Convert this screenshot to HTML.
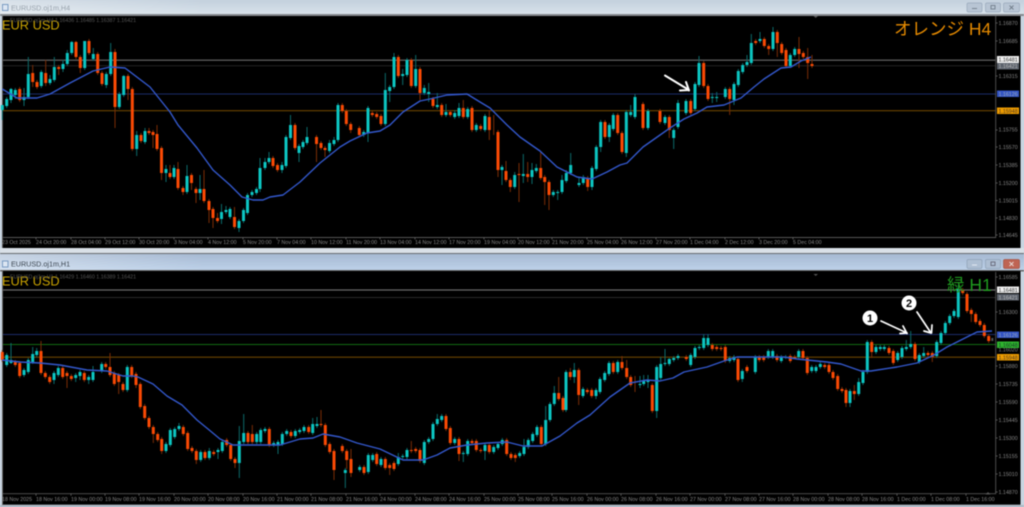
<!DOCTYPE html>
<html><head><meta charset="utf-8"><title>EURUSD</title>
<style>
html,body{margin:0;padding:0;background:#c9d5e1;width:1024px;height:507px;overflow:hidden}
svg{display:block;filter:blur(.4px)}
text{font-family:"Liberation Sans","Noto Sans CJK JP",sans-serif}
.t text,.p text{font-size:5.3px;fill:#858585}
</style></head><body>
<svg width="1024" height="507" viewBox="0 0 1024 507" xmlns="http://www.w3.org/2000/svg">
<defs>
<linearGradient id="g1" x1="0" y1="0" x2="0" y2="1"><stop offset="0" stop-color="#c3d0dd"/><stop offset="1" stop-color="#d8e2ea"/></linearGradient>
<linearGradient id="g2" x1="0" y1="0" x2="0" y2="1"><stop offset="0" stop-color="#a6b9d2"/><stop offset="1" stop-color="#bdd1e9"/></linearGradient>
<linearGradient id="g3" x1="0" y1="0" x2="1" y2="0"><stop offset="0" stop-color="#fff" stop-opacity=".35"/><stop offset=".2" stop-color="#fff" stop-opacity="0"/></linearGradient>
</defs>
<rect width="1024" height="507" fill="#c9d5e1"/>
<!-- top window -->
<rect width="1024" height="14" fill="url(#g1)"/><rect width="1024" height="14" fill="url(#g3)"/>
<rect y="14" width="1024" height="2" fill="#85898e"/>
<rect x="2" y="16" width="1018.5" height="232" fill="#000"/>
<rect x="2" y="16" width="1" height="232" fill="#555"/>
<rect x="2.5" y="4.5" width="5.5" height="6" fill="#dce6f2" stroke="#6f93bd" stroke-width=".9"/>
<text x="11" y="10.5" font-size="7.2" fill="#98a2ac">EURUSD.oj1m,H4</text>
<g fill="#b8c5d4" stroke="#98a8bb" stroke-width=".7"><rect x="967" y="3" width="15" height="9" rx="1.5"/><rect x="985.5" y="3" width="15" height="9" rx="1.5"/><rect x="1003.5" y="3" width="16" height="9" rx="1.5"/></g>
<g fill="none" stroke="#717d8a" stroke-width=".9"><path d="M972 8.5h5"/><rect x="991" y="5.5" width="4" height="3.5"/><path d="M1009.5 5.5l4 4M1013.5 5.5l-4 4"/></g>
<!-- bottom window -->
<rect y="248" width="1024" height="5" fill="#d9e0e7"/>
<rect y="253" width="1024" height="1" fill="#686c70"/>
<rect y="254" width="1024" height="16" fill="url(#g2)"/><rect y="254" width="1024" height="16" fill="url(#g3)"/>
<rect y="270" width="1024" height="1.5" fill="#666"/>
<rect x="2" y="271" width="1018.5" height="233.7" fill="#000"/>
<rect x="2" y="271" width="1" height="234" fill="#666"/>
<rect y="505" width="1024" height="2" fill="#aeb8c3"/>
<rect x="2.5" y="261" width="5.5" height="6" fill="#dce6f2" stroke="#6f93bd" stroke-width=".9"/>
<text x="11" y="266.5" font-size="7.2" fill="#3c4650">EURUSD.oj1m,H1</text>
<g stroke-width=".7"><rect x="967" y="259.5" width="15" height="9" rx="1.5" fill="#aebfd3" stroke="#8da0b5"/><rect x="985.5" y="259.5" width="15" height="9" rx="1.5" fill="#aebfd3" stroke="#8da0b5"/><rect x="1003.5" y="259.5" width="16" height="9" rx="1.5" fill="#bf6453" stroke="#a35445"/></g>
<g fill="none" stroke-width=".9"><path d="M972 265h5" stroke="#e8eef5"/><rect x="991" y="262" width="4" height="3.5" stroke="#667"/><path d="M1009.5 262l4 4M1013.5 262l-4 4" stroke="#e8dcd8"/></g>

<!-- top chart levels -->
<path d="M3 60.2H996" stroke="#6a6a6a" stroke-width="1.2" fill="none"/>
<path d="M3 65.7H996" stroke="#222" fill="none"/>
<path d="M3 94H996" stroke="#1b2b68" stroke-width="1.1" fill="none"/>
<path d="M3 110.7H996" stroke="#6b4400" stroke-width="1.1" fill="none"/>
<!-- top wicks -->
<path fill="none" stroke="#0b6b6b" stroke-width="1" d="M2.3 105V120M6.7 97V108M11 88V103M15.3 88V99M24 88V106M28.3 57V99M41.3 70V88M50 75V85M54.3 57V82M63 60V72M67.3 50V66M71.7 41V55M84.7 41V70M93.3 48V61M106.3 72V88M110.7 43V76M119.3 92V109M123.7 75V97M136.7 131V156M145 128V144M166 165V182M174 165V179M187 165V194M200 175V200M221.5 204V224M226 206V214M230 207V219M239 219V232M243.5 208V223M247.5 193V215M252 190V197M256.5 187V195M260 158V192M265 158V170M269 152V164M282 162V173M286 135V168M290.5 115V140M299 144V162M303 140V149M307 127V145M329.5 140V153M334 137V146M338 103V142M363.7 130V137M368 106V142M385.3 73V126M389.7 85V102M394 53V89M402.7 69V85M407 58V77M415.7 55V88M424.3 85V95M428.7 83V102M437.3 93V109M446 104V117M454.7 110V119M459 103V118M467.7 107V119M476.3 123V132M485 114V132M502 165V185M514.7 172V189M523.3 154V183M532 163V184M536.3 164V173M553.3 190V197M557.7 190V200M562 175V194M566.3 170V183M570.7 153V175M579 177V187M583.3 175V185M592 166V190M596.3 145V171M600.7 120V152M609.3 123V142M613.3 113V131M626.3 110V157M630.7 105V117M635 94V119M648 109V130M665 115V125M673.7 128V149M678 100V129M686 99V115M695 82V111M699 56V87M712.3 93V103M716.7 92V102M725.3 87V99M734 82V105M738.3 69V87M742.7 63V74M747 55V67M751.3 34V65M760 32V43M773 27V51M790.3 53V68M794.7 47V57"/>
<path fill="none" stroke="#7a2c06" stroke-width="1" d="M19.7 87V102M32.7 65V87M37 80V89M45.7 60V86M58.7 65V75M76 41V59M80.3 55V73M89 39V55M97.7 52V75M102 71V86M115 49V128M128 74V100M132.3 87V151M141 133V143M149 128V135M153 130V148M157 125V151M161.5 146V180M170 165V179M178 162V190M183 186V195M191.5 173V190M196 187V203M204 170V203M209 199V223M213 207V228M217.5 213V223M234.5 207V229M273 156V168M277.5 163V172M295 123V150M316.5 135V162M321 141V150M325 146V157M342.3 103V113M346.3 109V126M350.7 122V133M359.3 126V137M372.3 111V117M376.7 112V119M381 114V126M398.3 55V78M411.3 58V88M420 67V100M433 97V108M441.7 103V117M450.3 110V117M463.3 100V119M472 106V132M480.7 124V131M489.3 110V140M493.7 115V135M498 130V177M506 161V182M510.3 178V192M519 163V202M527.7 162V182M540.7 152V180M544.7 175V205M549 180V210M587.7 176V191M605 120V139M617.7 113V135M622 131V154M643 102V130M660 109V124M669.3 115V138M690.7 99V115M703.7 61V88M708 84V101M729.7 87V115M755.7 39V45M764.3 37V48M768.7 44V55M777.3 30V57M781.7 42V55M786 48V68M799 37V68M803.3 51V59M807.7 48V79M812 55V68"/>
<!-- top bodies -->
<path fill="none" stroke="#0cc6c2" stroke-width="3" d="M2.3 105V110M6.7 99V106M11 89V100M15.3 90V95M24 97V100M28.3 74V97M41.3 72V86M50 79V83M54.3 67V80M63 64V69M67.3 53V64M71.7 42V53M84.7 41V68M93.3 54V59M106.3 74V85M110.7 52V74M119.3 94V107M123.7 76V95M136.7 135V149M145 131V142M166 169V173M174 168V177M187 176V192M200 189V193M221.5 212V219M226 210V212M230 209V217M239 221V228M243.5 210V221M247.5 195V213M252 192V195M256.5 189V193M260 168V189M265 162V168M269 158V162M282 165V170M286 137V166M290.5 125V138M299 146V153M303 142V147M307 137V143M329.5 143V151M334 140V144M338 105V140M363.7 132V135M368 108V133M385.3 90V124M389.7 87V91M394 57V87M402.7 74V76M407 60V75M415.7 69V86M424.3 88V93M428.7 92V94M437.3 105V107M446 112V115M454.7 113V117M459 108V116M467.7 109V117M476.3 125V130M485 116V130M502 167V170M514.7 175V187M523.3 174V176M532 170V177M536.3 168V171M553.3 192V195M557.7 192V193M562 180V192M566.3 173V181M570.7 165V173M579 183V185M583.3 177V183M592 168V187M596.3 147V169M600.7 122V147M609.3 125V137M613.3 115V129M626.3 112V153M630.7 112V115M635 97V117M648 111V128M665 117V123M673.7 130V138M678 103V127M686 101V113M695 84V109M699 63V85M712.3 97V98M716.7 97V98M725.3 89V97M734 84V100M738.3 71V85M742.7 65V72M747 62V65M751.3 43V63M760 39V41M773 32V49M790.3 55V66M794.7 49V55"/>
<path fill="none" stroke="#fb4a04" stroke-width="3" d="M19.7 89V100M32.7 73V82M37 82V87M45.7 73V83M58.7 67V69M76 42V57M80.3 57V68M89 41V53M97.7 54V73M102 73V84M115 52V107M128 76V89M132.3 89V149M141 135V141M149 131V133M153 132V135M157 134V149M161.5 148V173M170 173V177M178 169V188M183 188V192M191.5 175V183M196 189V193M204 189V201M209 201V210M213 209V218M217.5 218V221M234.5 217V227M273 158V166M277.5 165V170M295 125V148M316.5 137V144M321 143V148M325 148V150M342.3 105V111M346.3 111V124M350.7 124V130M359.3 128V135M372.3 113V115M376.7 114V117M381 116V124M398.3 57V76M411.3 60V86M420 69V93M433 99V106M441.7 105V115M450.3 112V115M463.3 108V117M472 108V130M480.7 126V129M489.3 117V130M498 132V170M506 171V180M510.3 180V187M519 174V175M527.7 174V177M540.7 168V178M544.7 177V182M549 182V195M587.7 178V187M605 122V137M617.7 115V133M622 133V152M643 104V128M660 111V122M669.3 117V130M690.7 101V113M703.7 63V86M708 86V99M729.7 89V99M755.7 41V43M764.3 39V46M768.7 46V49M777.3 32V43M781.7 44V53M786 50V66M799 49V54M803.3 53V57M807.7 57V63M812 64V66"/>
<polyline fill="none" stroke="#3358cc" stroke-width="1.4" stroke-linejoin="round" points="2.3,89 17,98 37,98 50,94 70,83 93,71 110,67 125,68 150,87 170,112 178,125 197,148 213,170 230,185 242,197 253,200 263,200 270,197 283,195 300,182 320,163 340,147 350,141 367,133 380,131 390,125 403,112 420,101 430,99 447,95 467,94 480,102 490,108 507,125 520,137 540,151 557,167 577,177 592,179 607,172 620,165 627,163 643,147 670,128 684,119 697,113 707,107 724,105 741,98 754,87 764,79 781,68 791,67 801,61 811,57"/>
<path d="M665 75.5L689 90M689 90L680 90.5M689 90.5L686 82" fill="none" stroke="#fff" stroke-width="2" stroke-linecap="round"/>
<text x="2" y="29.3" font-size="12.8" fill="#c8a200">EUR USD</text>
<text x="10" y="22" font-size="5.3" fill="#555">EURUSD.oj1m,H4 1.16436 1.16485 1.16387 1.16421</text>
<text x="894" y="35" font-size="17.5" fill="#e58a00">オレンジ H4</text>
<path d="M815.7 18L813.5 16H818z" fill="#555"/>
<!-- top axes -->
<path d="M995.7 16V237.5H3" fill="none" stroke="#555" stroke-width=".9"/>
<path stroke="#666" stroke-width=".8" d="M995.7 23h2M995.7 41h2M995.7 76h2M995.7 130h2M995.7 147h2M995.7 165h2M995.7 183h2M995.7 200.5h2M995.7 218h2M995.7 235h2M36 237.5v2M71 237.5v2M105 237.5v2M139 237.5v2M174 237.5v2M208 237.5v2M243 237.5v2M277 237.5v2M311 237.5v2M346 237.5v2M380 237.5v2M415 237.5v2M449 237.5v2M484 237.5v2M518 237.5v2M552 237.5v2M587 237.5v2M621 237.5v2M656 237.5v2M690 237.5v2M725 237.5v2M759 237.5v2M793 237.5v2"/>
<g class="p"><text x="998.5" y="25">1.16870</text><text x="998.5" y="43">1.16685</text><text x="998.5" y="78">1.16315</text><text x="998.5" y="131.5">1.15755</text><text x="998.5" y="149">1.15570</text><text x="998.5" y="167">1.15385</text><text x="998.5" y="185">1.15200</text><text x="998.5" y="202.5">1.15015</text><text x="998.5" y="220">1.14830</text><text x="998.5" y="237">1.14645</text></g>
<rect x="997" y="56" width="22" height="7" fill="#eee"/><text x="998.5" y="61.5" font-size="5.3" fill="#333">1.16481</text>
<rect x="997" y="63" width="22" height="6.5" fill="#5c626c"/><text x="998.5" y="68" font-size="5.3" fill="#bbb">1.16421</text>
<rect x="997" y="90.5" width="22" height="6.5" fill="#3354c4"/><text x="998.5" y="95.8" font-size="5.3" fill="#9ab">1.16126</text>
<rect x="997" y="107.5" width="22" height="6.5" fill="#ee9c00"/><text x="998.5" y="112.8" font-size="5.3" fill="#432">1.15948</text>
<g class="t"><text x="2" y="244">23 Oct 2025</text><text x="36" y="244">24 Oct 20:00</text><text x="71" y="244">28 Oct 04:00</text><text x="105" y="244">29 Oct 12:00</text><text x="139" y="244">30 Oct 20:00</text><text x="174" y="244">3 Nov 04:00</text><text x="208" y="244">4 Nov 12:00</text><text x="243" y="244">5 Nov 20:00</text><text x="277" y="244">7 Nov 04:00</text><text x="311" y="244">10 Nov 12:00</text><text x="346" y="244">11 Nov 20:00</text><text x="380" y="244">13 Nov 04:00</text><text x="415" y="244">14 Nov 12:00</text><text x="449" y="244">17 Nov 20:00</text><text x="484" y="244">19 Nov 04:00</text><text x="518" y="244">20 Nov 12:00</text><text x="552" y="244">21 Nov 20:00</text><text x="587" y="244">25 Nov 04:00</text><text x="621" y="244">26 Nov 12:00</text><text x="656" y="244">27 Nov 20:00</text><text x="690" y="244">1 Dec 04:00</text><text x="725" y="244">2 Dec 12:00</text><text x="759" y="244">3 Dec 20:00</text><text x="793" y="244">5 Dec 04:00</text></g>

<!-- bottom chart levels -->
<path d="M3 290H996" stroke="#6a6a6a" stroke-width="1.2" fill="none"/>
<path d="M3 297.5H996" stroke="#2a2a2a" fill="none"/>
<path d="M3 334.5H996" stroke="#1b2b68" stroke-width="1.1" fill="none"/>
<path d="M3 344.5H996" stroke="#116a11" stroke-width="1.1" fill="none"/>
<path d="M3 357.2H996" stroke="#6b4400" stroke-width="1.1" fill="none"/>
<!-- bottom wicks -->
<path fill="none" stroke="#0b6b6b" stroke-width="1" d="M6.7 353V367M11 343V364M24 368V377M28.3 358V374M32.7 347V364M36.7 348V357M54 371V384M58.3 366V377M75.7 373V382M80 370V380M88.7 375V384M93 366V382M101.7 362V373M127.3 365V392M166 442V453M170.3 428V447M174.7 427V439M179 423V431M200.7 450V462M209.3 448V460M218 448V459M222.3 440V453M239.3 426V478M243.7 414V444M256.7 432V444M260.7 428V444M265 427V433M273.7 441V447M278 440V454M282.3 432V446M286.7 429V436M295.3 429V438M299.7 428V434M304 425V433M312.7 418V435M317 417V428M345.3 468V488M359.7 465V472M368.3 453V474M372.7 453V462M381 457V467M398.3 453V466M402.7 454V459M407 448V459M424.3 440V465M428.7 437V444M433 422V441M437.3 414V426M441.7 414V422M454.7 437V445M463.3 451V462M467.7 439V456M485 443V460M493.7 445V454M498 442V450M502.3 438V446M519.7 451V458M524 439V456M528.3 438V449M532.7 432V443M537 425V437M545.7 406V446M550 402V422M554.3 386V406M566 370V412M574.3 363V383M583 387V398M596 388V399M600 377V394M604.7 371V382M609 361V376M617.7 360V374M640 376V388M643.7 375V386M648 375V388M656.7 365V418M660.7 357V380M665 349V366M669.3 358V366M673.7 356V362M678 354V360M690.7 353V367M695 346V359M699.3 345V350M703.7 334V350M708 334V347M729.7 356V363M734 355V362M742.3 369V382M755.3 355V374M768.3 349V359M772.7 349V359M781.3 355V363M785.7 355V359M798.7 349V359M811.7 365V373M816 365V373M820.3 362V369M850 389V407M858.7 378V396M863 370V385M867.3 340V374M876 345V354M880.3 345V351M884.3 345V351M897.7 351V362M902 346V359M906.3 340V351M910.7 331V349M919.3 353V364M923.7 347V358M936.7 340V358M941 331V345M945.3 321V335M949.7 314V325M954 309V318M958.3 285V319"/>
<path fill="none" stroke="#7a2c06" stroke-width="1" d="M2.3 350V362M15.3 360V367M19.7 361V378M41 341V375M45.3 371V379M49.7 375V384M62.7 366V379M67 371V388M71.3 374V381M84.3 371V382M105.7 362V369M110 353V377M114.3 371V386M118.7 373V394M123 382V392M131.7 365V378M136 372V388M140.3 382V409M144.7 404V420M149 416V429M153.3 425V443M157.7 432V442M161.7 437V454M183.3 425V436M187.7 431V451M192 446V453M196.3 449V464M205 450V460M213.7 450V456M226.7 438V447M230.7 443V461M235 457V468M248 431V444M252.3 425V444M269.3 427V447M291 430V438M308.7 425V434M321 410V427M325.3 423V447M329.7 442V454M334 449V480M342.3 444V453M346.7 449V469M351 449V477M364 465V475M376.7 452V466M385.3 457V470M389.7 463V475M394 461V471M411.3 441V453M415.7 447V453M420 448V463M446 414V431M450.3 426V445M459 437V461M472 439V445M476.3 439V452M480.7 448V453M489.3 443V454M506.7 438V456M511 452V460M515.3 453V462M541.3 425V446M558.7 377V401M563 396V412M570.3 368V380M578.7 368V405M587.3 388V394M591.7 388V398M613.3 361V374M622 356V370M626.7 360V379M630.7 375V387M635 376V392M652.3 383V413M686.3 355V361M712.3 343V351M716.7 345V351M721 346V351M725.3 345V363M738 357V382M747 365V373M759.3 355V362M763.7 355V362M777 354V362M790.3 354V363M794.7 355V359M803 349V360M807.3 356V375M824.7 363V369M829 363V374M833 370V380M837.7 374V391M842 387V393M846 388V407M854.3 385V400M871.7 340V358M889 346V355M893.3 349V365M915 342V361M928 351V357M932.3 351V362M962.7 288V295M967 292V313M971.3 308V322M975.7 312V324M980 319V327M984.3 323V338M988.7 334V343"/>
<!-- bottom bodies -->
<path fill="none" stroke="#0cc6c2" stroke-width="3" d="M6.7 355V365M11 360V363M24 370V375M28.3 360V372M32.7 354V362M36.7 351V355M54 373V380M58.3 368V375M75.7 375V378M80 372V376M88.7 377V380M93 372V380M101.7 364V371M127.3 367V390M166 444V451M170.3 430V445M174.7 429V437M179 426V429M200.7 452V460M209.3 451V458M218 450V452M222.3 442V451M239.3 441V463M243.7 433V442M256.7 434V442M260.7 430V442M265 429V431M273.7 443V445M278 442V445M282.3 434V444M286.7 431V434M295.3 431V436M299.7 430V432M304 427V431M312.7 424V433M317 424V426M345.3 470V473M359.7 467V470M368.3 455V472M372.7 455V460M381 459V465M398.3 457V464M402.7 456V457M407 450V457M424.3 442V463M428.7 439V442M433 424V439M437.3 419V424M441.7 416V420M454.7 439V443M463.3 453V454M467.7 441V454M485 445V451M493.7 447V452M498 444V448M502.3 440V444M519.7 453V456M524 447V454M528.3 440V447M532.7 434V441M537 427V435M545.7 420V444M550 404V420M554.3 393V404M566 372V410M574.3 370V377M583 389V396M596 390V396M600 379V392M604.7 373V380M609 363V374M617.7 362V372M640 384V385M643.7 381V384M648 380V382M656.7 367V411M660.7 364V378M665 363V364M669.3 359V364M673.7 358V360M678 356V358M690.7 355V365M695 348V357M699.3 347V348M703.7 338V348M708 338V345M729.7 358V361M734 357V360M742.3 371V379M755.3 357V372M768.3 351V357M772.7 351V357M781.3 357V361M785.7 357V358M798.7 351V357M811.7 367V371M816 367V371M820.3 364V367M850 391V403M858.7 382V394M863 372V383M867.3 342V372M876 347V352M880.3 347V349M884.3 347V349M897.7 353V360M902 348V357M906.3 347V349M910.7 344V347M919.3 355V362M923.7 353V356M936.7 342V356M941 333V343M945.3 323V333M949.7 316V323M954 311V316M958.3 289V317"/>
<path fill="none" stroke="#fb4a04" stroke-width="3" d="M2.3 352V360M15.3 362V365M19.7 363V376M41 351V373M45.3 373V377M49.7 377V382M62.7 368V377M67 373V376M71.3 376V379M84.3 373V380M105.7 364V367M110 367V375M114.3 373V384M118.7 375V382M123 384V390M131.7 367V376M136 374V385M140.3 384V407M144.7 406V418M149 418V427M153.3 427V434M157.7 434V440M161.7 439V451M183.3 427V434M187.7 433V449M192 448V451M196.3 451V460M205 452V458M213.7 452V454M226.7 440V445M230.7 445V459M235 459V463M248 433V442M252.3 434V442M269.3 429V445M291 432V436M308.7 427V432M321 424V425M325.3 425V445M329.7 444V452M334 451V470M342.3 446V451M346.7 451V460M351 459V473M364 467V473M376.7 454V464M385.3 459V468M389.7 465V468M394 463V469M411.3 450V451M415.7 449V451M420 450V461M446 416V429M450.3 428V443M459 439V454M472 441V443M476.3 441V450M480.7 450V451M489.3 445V452M506.7 440V454M511 454V458M515.3 455V458M541.3 427V444M558.7 393V399M563 398V410M570.3 372V377M578.7 370V395M587.3 390V392M591.7 390V396M613.3 363V372M622 362V368M626.7 368V377M630.7 377V385M652.3 385V411M686.3 357V359M712.3 345V349M716.7 347V349M721 348V349M725.3 347V361M738 359V380M747 367V371M759.3 357V360M763.7 357V360M777 356V360M790.3 356V361M794.7 357V358M803 351V358M807.3 358V373M824.7 365V367M829 365V372M833 372V378M837.7 376V389M842 389V391M846 390V403M854.3 391V394M871.7 342V352M889 348V353M893.3 351V363M915 344V359M928 353V355M932.3 353V357M962.7 290V293M967 294V311M971.3 310V314M975.7 314V322M980 321V325M984.3 325V336M988.7 336V341"/>
<path d="M992.3 338V341" stroke="#555" stroke-width="2" fill="none"/>
<polyline fill="none" stroke="#3358cc" stroke-width="1.4" stroke-linejoin="round" points="2,360 20,362 40,363 60,365 87,370 107,371 123,376 133,376 138,377 153,384 167,396 182,405 197,420 208,429 220,439 233,445 267,445 280,445 300,439 313,438 323,434 340,437 357,443 380,449 403,460 423,460 437,455 450,448 467,445 487,443 507,442 523,446 542,446 560,436 577,423 590,415 610,397 630,383 647,380 660,381 673,378 684,372 707,367 724,361 737,357 784,357 797,359 827,362 841,364 861,371 871,371 897,367 917,363 934,355 947,347 961,340 977,332 992,331"/>
<path d="M881 321L907 333M907 333L900 333.5M907 333.5L903 326M917 312L931 333M931 333L924 331M931.5 333L932 325" fill="none" stroke="#fff" stroke-width="1.7" stroke-linecap="round"/>
<circle cx="870" cy="318" r="7.5" fill="#fff"/><text x="870" y="322" font-size="11" font-weight="bold" text-anchor="middle" fill="#000">1</text>
<circle cx="909" cy="303" r="7.5" fill="#fff"/><text x="909" y="307" font-size="11" font-weight="bold" text-anchor="middle" fill="#000">2</text>
<text x="2" y="285.3" font-size="12.8" fill="#c8a200">EUR USD</text>
<text x="10" y="278.5" font-size="5.3" fill="#555">EURUSD.oj1m,H1 1.16429 1.16460 1.16389 1.16421</text>
<text x="947" y="291" font-size="17.5" fill="#1f9a1f">緑 H1</text>
<path d="M815.7 276L813.5 274H818z" fill="#555"/>
<path d="M988 492l-2.5 2.5h5z" fill="#555"/>
<!-- bottom axes -->
<path d="M995.7 272V493.7H3" fill="none" stroke="#555" stroke-width=".9"/>
<path stroke="#666" stroke-width=".8" d="M995.7 277h2M995.7 312h2M995.7 366h2M995.7 384h2M995.7 402h2M995.7 420h2M995.7 438h2M995.7 456h2M995.7 474h2M995.7 492h2M36 493.7v2M71 493.7v2M105 493.7v2M139 493.7v2M174 493.7v2M208 493.7v2M243 493.7v2M277 493.7v2M311 493.7v2M346 493.7v2M380 493.7v2M415 493.7v2M449 493.7v2M484 493.7v2M518 493.7v2M552 493.7v2M587 493.7v2M621 493.7v2M656 493.7v2M690 493.7v2M725 493.7v2M759 493.7v2M793 493.7v2M828 493.7v2M862 493.7v2M897 493.7v2M931 493.7v2M966 493.7v2"/>
<g class="p"><text x="998.5" y="279">1.16585</text><text x="998.5" y="314">1.16300</text><text x="998.5" y="351.5">1.16020</text><text x="998.5" y="368">1.15880</text><text x="998.5" y="386">1.15735</text><text x="998.5" y="404">1.15590</text><text x="998.5" y="422">1.15445</text><text x="998.5" y="440">1.15300</text><text x="998.5" y="458">1.15155</text><text x="998.5" y="476">1.15010</text><text x="998.5" y="494">1.14870</text></g>
<rect x="997" y="286.5" width="22" height="6.5" fill="#eee"/><text x="998.5" y="291.8" font-size="5.3" fill="#333">1.16481</text>
<rect x="997" y="294" width="22" height="6.5" fill="#5c626c"/><text x="998.5" y="299.3" font-size="5.3" fill="#bbb">1.16421</text>
<rect x="997" y="331.5" width="22" height="6.5" fill="#3354c4"/><text x="998.5" y="336.8" font-size="5.3" fill="#9ab">1.16126</text>
<rect x="997" y="341.5" width="22" height="6.5" fill="#2fb52f"/><text x="998.5" y="346.8" font-size="5.3" fill="#132">1.16048</text>
<rect x="997" y="354" width="22" height="6.5" fill="#ee9c00"/><text x="998.5" y="359.3" font-size="5.3" fill="#432">1.15948</text>
<g class="t"><text x="2" y="501">18 Nov 2025</text><text x="36" y="501">18 Nov 16:00</text><text x="71" y="501">19 Nov 00:00</text><text x="105" y="501">19 Nov 08:00</text><text x="139" y="501">19 Nov 16:00</text><text x="174" y="501">20 Nov 00:00</text><text x="208" y="501">20 Nov 08:00</text><text x="243" y="501">20 Nov 16:00</text><text x="277" y="501">21 Nov 00:00</text><text x="311" y="501">21 Nov 08:00</text><text x="346" y="501">21 Nov 16:00</text><text x="380" y="501">24 Nov 00:00</text><text x="415" y="501">24 Nov 08:00</text><text x="449" y="501">24 Nov 16:00</text><text x="484" y="501">25 Nov 00:00</text><text x="518" y="501">25 Nov 08:00</text><text x="552" y="501">25 Nov 16:00</text><text x="587" y="501">26 Nov 00:00</text><text x="621" y="501">26 Nov 08:00</text><text x="656" y="501">26 Nov 16:00</text><text x="690" y="501">27 Nov 00:00</text><text x="725" y="501">27 Nov 08:00</text><text x="759" y="501">27 Nov 16:00</text><text x="793" y="501">28 Nov 00:00</text><text x="828" y="501">28 Nov 08:00</text><text x="862" y="501">28 Nov 16:00</text><text x="897" y="501">1 Dec 00:00</text><text x="931" y="501">1 Dec 08:00</text><text x="966" y="501">1 Dec 16:00</text></g>
</svg>
</body></html>
